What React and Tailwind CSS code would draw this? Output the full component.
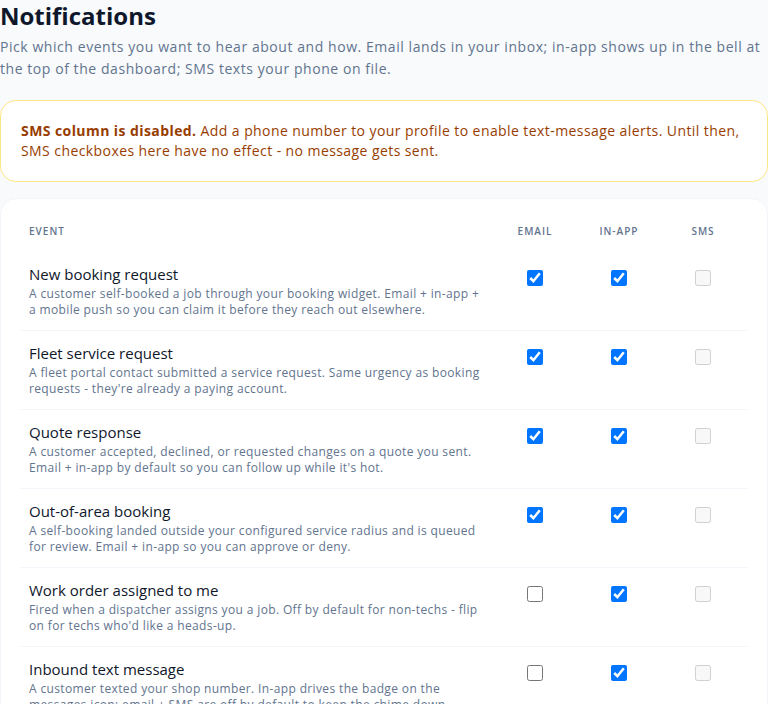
const FONT = { fontFamily: '"Open Sans", "Noto Sans", Arial, sans-serif' };

const events = [
  {
    title: "New booking request",
    desc: "A customer self-booked a job through your booking widget. Email + in-app + a mobile push so you can claim it before they reach out elsewhere.",
    email: true,
    inApp: true,
  },
  {
    title: "Fleet service request",
    desc: "A fleet portal contact submitted a service request. Same urgency as booking requests - they're already a paying account.",
    email: true,
    inApp: true,
  },
  {
    title: "Quote response",
    desc: "A customer accepted, declined, or requested changes on a quote you sent. Email + in-app by default so you can follow up while it's hot.",
    email: true,
    inApp: true,
  },
  {
    title: "Out-of-area booking",
    desc: "A self-booking landed outside your configured service radius and is queued for review. Email + in-app so you can approve or deny.",
    email: true,
    inApp: true,
  },
  {
    title: "Work order assigned to me",
    desc: "Fired when a dispatcher assigns you a job. Off by default for non-techs - flip on for techs who'd like a heads-up.",
    email: false,
    inApp: true,
  },
  {
    title: "Inbound text message",
    desc: "A customer texted your shop number. In-app drives the badge on the messages icon; email + SMS are off by default to keep the chime down.",
    email: false,
    inApp: true,
  },
];

function Row({ ev, last }) {
  return (
    <tr className={last ? "" : "border-b border-slate-100"}>
      <td className="px-2 pt-3 pb-3 align-top">
        <div className="text-[15px] leading-5 font-medium text-slate-900">{ev.title}</div>
        <div className="mt-0.5 text-xs leading-4 tracking-[0.03em] text-slate-500">{ev.desc}</div>
      </td>
      <td className="pt-[18px] pr-1 align-top text-center">
        <input type="checkbox" defaultChecked={ev.email} className="w-4 h-4 align-top" />
      </td>
      <td className="pt-[18px] pr-1 align-top text-center">
        <input type="checkbox" defaultChecked={ev.inApp} className="w-4 h-4 align-top" />
      </td>
      <td className="pt-[18px] pr-1 align-top text-center">
        <input type="checkbox" disabled className="w-4 h-4 align-top" />
      </td>
    </tr>
  );
}

export default function App() {
  return (
    <div className="min-h-screen bg-slate-50 text-slate-900" style={FONT}>
      <h1 className="text-2xl leading-8 font-bold text-slate-900">Notifications</h1>
      <p className="mt-1 text-sm leading-[22px] tracking-[0.04em] text-slate-500">
        Pick which events you want to hear about and how. Email lands in your inbox; in-app shows up in the bell at
        the top of the dashboard; SMS texts your phone on file.
      </p>

      <div className="mt-5 rounded-2xl border border-amber-200 bg-white p-5 text-sm leading-5 tracking-[0.03em] text-amber-800">
        <span className="font-bold">SMS column is disabled.</span> Add a phone number to your profile to enable
        text-message alerts. Until then, SMS checkboxes here have no effect - no message gets sent.
      </div>

      <div className="mt-4 rounded-2xl border border-slate-100 bg-white p-5">
        <table className="w-full border-collapse">
          <thead>
            <tr className="text-[10px] leading-4 font-semibold uppercase tracking-widest text-slate-500">
              <th className="px-2 pt-1 pb-[13px] text-left font-semibold">Event</th>
              <th className="w-[84px] pt-1 pr-1 pb-[13px] text-center font-semibold">Email</th>
              <th className="w-[84px] pt-1 pr-1 pb-[13px] text-center font-semibold">In-app</th>
              <th className="w-[84px] pt-1 pr-1 pb-[13px] text-center font-semibold">SMS</th>
            </tr>
          </thead>
          <tbody>
            {events.map((ev, i) => (
              <Row key={ev.title} ev={ev} last={i === events.length - 1} />
            ))}
          </tbody>
        </table>
      </div>
    </div>
  );
}
